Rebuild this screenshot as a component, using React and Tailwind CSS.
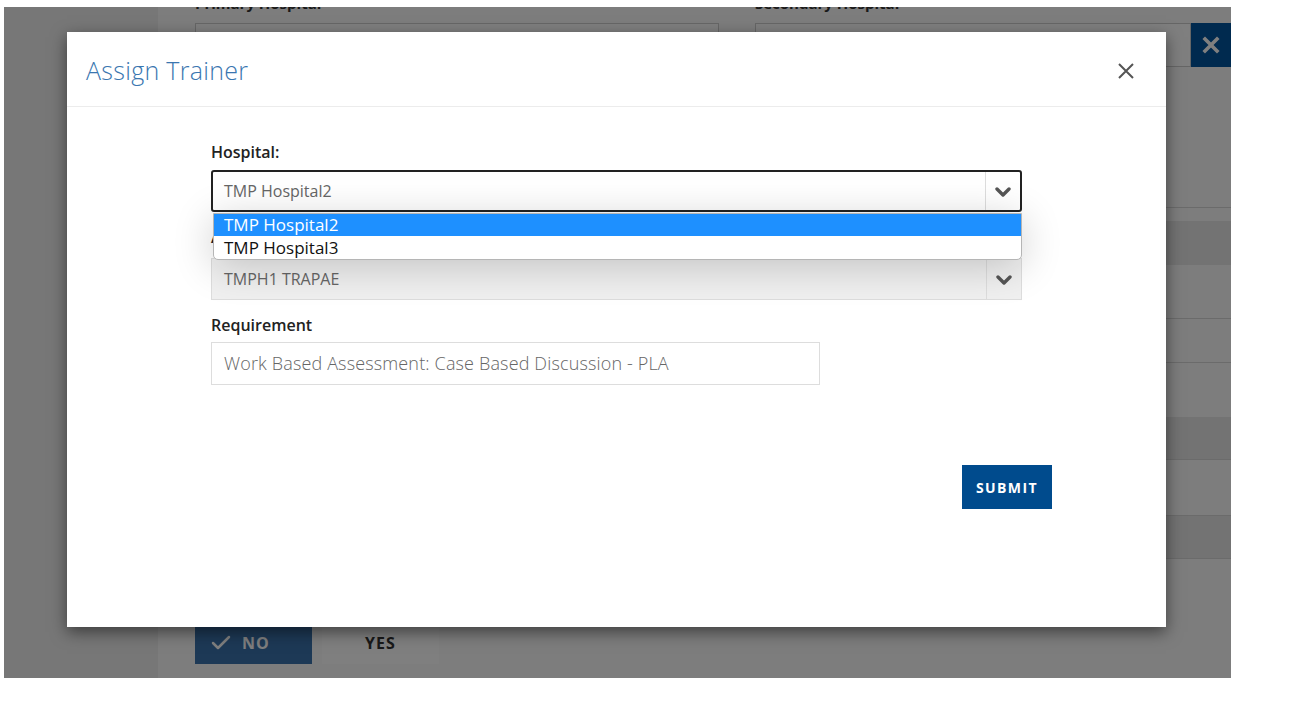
import { Check } from 'lucide-react';

const FONT = { fontFamily: "'Open Sans', 'Noto Sans', sans-serif" };

const Chevron = () => (
  <svg width="16" height="10" viewBox="0 0 16 10">
    <polyline points="2,2 8,8 14,2" fill="none" stroke="#555" strokeWidth="3.4" strokeLinecap="round" strokeLinejoin="round" />
  </svg>
);

// page behind the modal (under the backdrop)
const BackPage = () => (
  <div className="flex h-full">
    <div className="w-[154px] bg-[#eeeeee] shrink-0" />
    <div className="flex-1 bg-[#fafafa] flex flex-col">
      <div className="flex pl-[37px] mt-[-14px]">
        <div className="w-[524px] shrink-0">
          <p className="h-[20px] text-[15px] font-bold text-[#333] leading-[20px]">Primary Hospital</p>
          <div className="mt-[10px] h-[44px] border border-[#ccc] bg-white" />
        </div>
        <div className="ml-[36px] flex-1">
          <p className="h-[20px] text-[15px] font-bold text-[#333] leading-[20px]">Secondary Hospital</p>
          <div className="mt-[10px] flex h-[44px]">
            <div className="flex-1 border border-[#ccc] bg-white" />
            <div className="w-[40px] bg-[#00549e] flex items-center justify-center">
              <svg width="18" height="18" viewBox="0 0 18 18">
                <path d="M3 3 L15 15 M15 3 L3 15" stroke="#fff" strokeWidth="3.6" strokeLinecap="square" />
              </svg>
            </div>
          </div>
        </div>
      </div>
      <div className="h-[140px]" />
      <div className="h-[14px] border-t border-[#d6d6d6]" />
      <div className="h-[44px] bg-[#e6e6e6]" />
      <div className="h-[54px] border-b border-[#d6d6d6]" />
      <div className="h-[44px] border-b border-[#d6d6d6]" />
      <div className="h-[54px]" />
      <div className="h-[43px] bg-[#e6e6e6] border-b border-[#d6d6d6]" />
      <div className="h-[56px] border-b border-[#d6d6d6]" />
      <div className="h-[43px] bg-[#e6e6e6] border-b border-[#d6d6d6]" />
      <div className="flex pl-[37px] mt-[63px] gap-[10px]">
        <div className="w-[117px] h-[42px] bg-[#3a72ac] flex items-center pl-[14px] gap-[9px] text-white text-[16px] font-bold tracking-[1px]">
          <Check size={24} strokeWidth={2.5} />
          NO
        </div>
        <div className="w-[117px] h-[42px] bg-white flex items-center justify-center text-[#333] text-[16px] font-bold tracking-[1px]">
          YES
        </div>
      </div>
    </div>
  </div>
);

const AssignTrainerModal = () => (
  <div className="absolute left-[63px] top-[25px] w-[1099px] h-[595px] bg-white shadow-[0_5px_15px_rgba(0,0,0,0.5)] flex flex-col">
    {/* header */}
    <div className="h-[75px] border-b border-[#ececec] flex items-center justify-between pl-[19px] pr-[31px] pt-[3px] shrink-0">
      <h2 className="text-[25px] font-light text-[#3a76b0] tracking-[0.3px]">Assign Trainer</h2>
      <svg width="18" height="18" viewBox="0 0 18 18">
        <path d="M2 2 L16 16 M16 2 L2 16" stroke="#555" strokeWidth="2" />
      </svg>
    </div>

    {/* body */}
    <div className="pl-[144px] pr-[114px] pt-[35px] flex flex-col">
      <label className="block h-[20px] text-[16px] font-semibold text-[#222] leading-[20px]">Hospital:</label>
      <div className="relative mt-[8px] w-[811px] h-[42px] border-2 border-[#222] rounded-[3px] flex items-center z-10">
        <span className="flex-1 pl-[11px] text-[16px] text-[#666]">TMP Hospital2</span>
        <div className="w-[35px] h-full border-l border-[#ddd] flex items-center justify-center pt-[1px]">
          <Chevron />
        </div>
        {/* open native list */}
        <div className="absolute left-0 right-[-2px] top-[100%] mt-[3px] bg-white border border-[#b5b5b5] rounded-b-[5px] shadow-[0_6px_40px_rgba(0,0,0,0.2)] overflow-hidden">
          <div className="h-[22px] bg-[#1e90ff] text-white text-[17px] leading-[22px] pl-[10px]">TMP Hospital2</div>
          <div className="h-[23px] text-[#111] text-[17px] leading-[23px] pl-[10px]">TMP Hospital3</div>
        </div>
      </div>

      <label className="block mt-[15px] h-[20px] text-[16px] font-semibold text-[#222] leading-[20px]">Assessor:</label>
      <div className="mt-[11px] w-[811px] h-[42px] border border-[#ddd] bg-[#f0f0f0] flex items-center">
        <span className="flex-1 pl-[12px] text-[16px] text-[#666]">TMPH1 TRAPAE</span>
        <div className="w-[35px] h-full border-l border-[#ddd] flex items-center justify-center pt-[1px]">
          <Chevron />
        </div>
      </div>

      <label className="block mt-[15px] h-[20px] text-[16px] font-semibold text-[#222] leading-[20px]">Requirement</label>
      <div className="mt-[7px] w-[609px] h-[43px] border border-[#ddd] flex items-center pl-[12px] text-[18px] font-light text-[#666] tracking-[0.15px]">
        Work Based Assessment: Case Based Discussion - PLA
      </div>

      <div className="flex justify-end mt-[80px]">
        <button className="w-[90px] h-[44px] bg-[#004b8d] text-white text-[14px] font-bold tracking-[1.4px]">
          SUBMIT
        </button>
      </div>
    </div>
  </div>
);

export default function App() {
  return (
    <div className="w-[1315px] h-[707px] bg-white pl-[4px] pt-[7px]" style={FONT}>
      <div className="relative w-[1227px] h-[671px] overflow-hidden">
        <BackPage />
        <div className="absolute inset-0 bg-black/50" />
        <AssignTrainerModal />
      </div>
    </div>
  );
}
